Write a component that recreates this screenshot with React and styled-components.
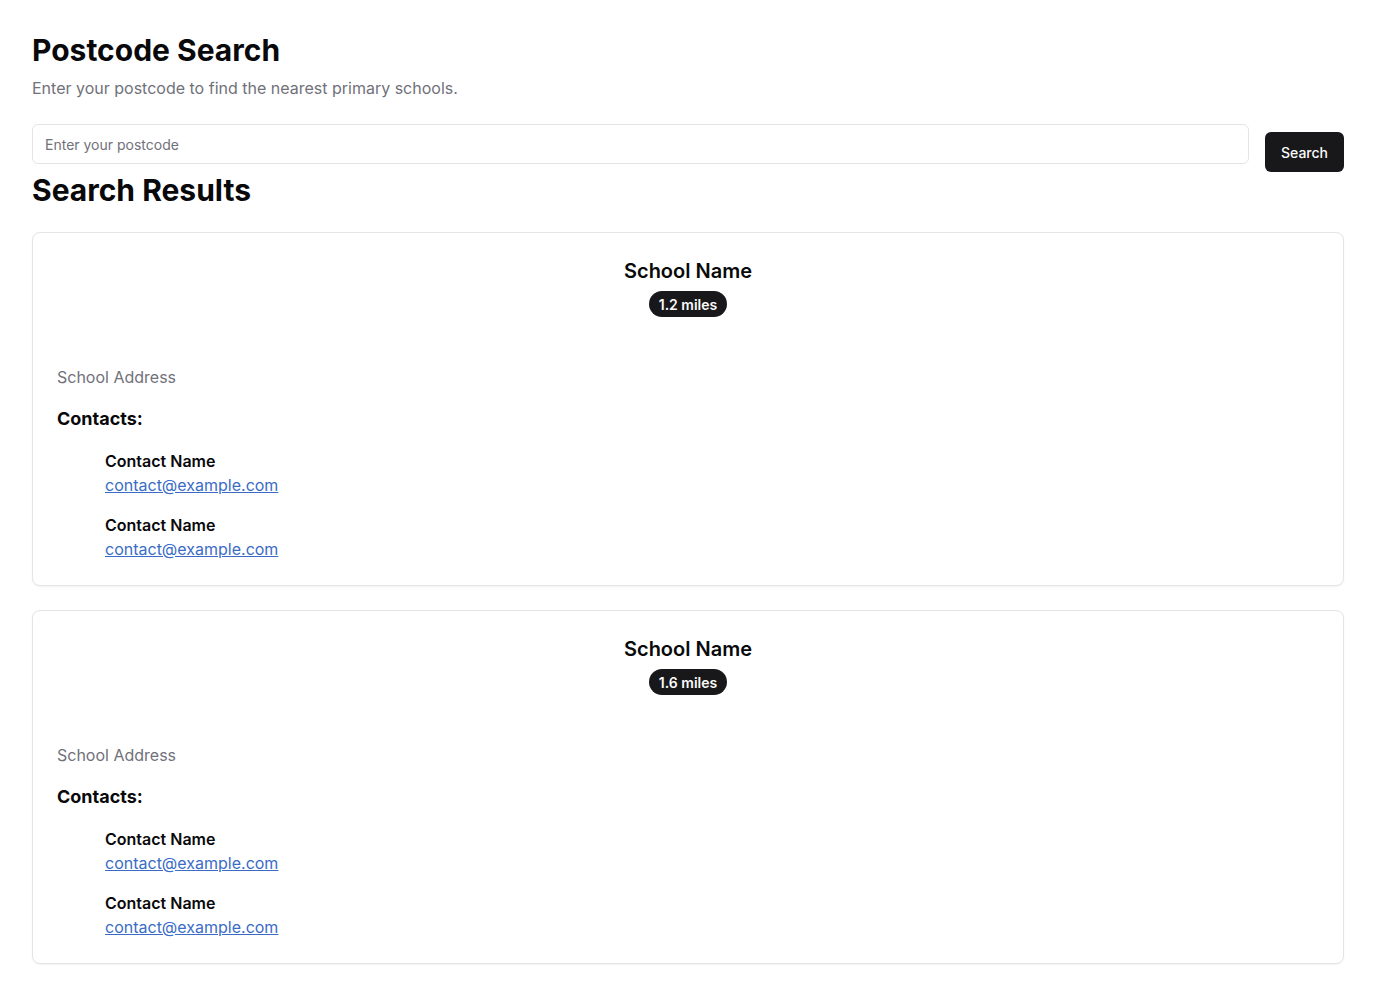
import React from 'react'
import styled, { createGlobalStyle } from 'styled-components'

const GlobalStyle = createGlobalStyle`
  * { box-sizing: border-box; }
  body {
    margin: 0;
    background: #fff;
    font-family: Inter, "Liberation Sans", sans-serif;
    color: #09090b;
  }
`

const Page = styled.div`
  padding: 32px;
`

const Title = styled.h1`
  margin: 0;
  font-size: 30px;
  line-height: 36px;
  font-weight: 700;
`

const Subtitle = styled.p`
  margin: 8px 0 0;
  font-size: 16px;
  line-height: 24px;
  color: #71717a;
`

const SearchRow = styled.form`
  display: flex;
  align-items: flex-start;
  gap: 16px;
  margin-top: 24px;
`

const Input = styled.input`
  flex: 1;
  height: 40px;
  padding: 0 12px;
  border: 1px solid #e4e4e7;
  border-radius: 6px;
  font-family: inherit;
  font-size: 14px;
  color: #09090b;
  outline: none;
  &::placeholder { color: #71717a; }
`

const Button = styled.button`
  height: 40px;
  margin-top: 8px;
  padding: 0 16px;
  border: none;
  border-radius: 6px;
  background: #18181b;
  color: #fafafa;
  font-family: inherit;
  font-size: 14px;
  font-weight: 500;
  cursor: pointer;
`

const SectionTitle = styled.h2`
  margin: 0;
  font-size: 30px;
  line-height: 36px;
  font-weight: 700;
`

const Results = styled.div`
  display: flex;
  flex-direction: column;
  gap: 24px;
  margin-top: 24px;
`

const Card = styled.div`
  border: 1px solid #e4e4e7;
  border-radius: 8px;
  background: #fff;
  box-shadow: 0 1px 2px rgba(0, 0, 0, 0.05);
`

const CardHeader = styled.div`
  display: flex;
  flex-direction: column;
  align-items: center;
  gap: 6px;
  padding: 24px;
`

const SchoolName = styled.h3`
  margin: 0;
  font-size: 20px;
  line-height: 28px;
  font-weight: 600;
`

const Badge = styled.span`
  display: inline-flex;
  align-items: center;
  height: 26px;
  padding: 0 10px;
  border-radius: 999px;
  background: #18181b;
  color: #fafafa;
  font-size: 14px;
  font-weight: 600;
`

const CardContent = styled.div`
  padding: 24px;
`

const Address = styled.p`
  margin: 0 0 16px;
  font-size: 16px;
  line-height: 24px;
  color: #71717a;
`

const ContactsTitle = styled.h4`
  margin: 0;
  font-size: 18px;
  line-height: 28px;
  font-weight: 700;
`

const ContactList = styled.ul`
  list-style: none;
  margin: 16px 0 0;
  padding: 0 0 0 48px;
  display: flex;
  flex-direction: column;
  gap: 16px;
`

const ContactName = styled.div`
  font-size: 16px;
  line-height: 24px;
  font-weight: 600;
`

const Email = styled.a`
  font-size: 16px;
  line-height: 24px;
  color: #3a6cc6;
  text-decoration: underline;
`

const schools = [
  { name: 'School Name', distance: '1.2 miles' },
  { name: 'School Name', distance: '1.6 miles' },
]

const contacts = [
  { name: 'Contact Name', email: 'contact@example.com' },
  { name: 'Contact Name', email: 'contact@example.com' },
]

export default function App() {
  return (
    <Page>
      <GlobalStyle />
      <Title>Postcode Search</Title>
      <Subtitle>Enter your postcode to find the nearest primary schools.</Subtitle>
      <SearchRow onSubmit={(e) => e.preventDefault()}>
        <Input placeholder="Enter your postcode" />
        <Button type="submit">Search</Button>
      </SearchRow>
      <SectionTitle>Search Results</SectionTitle>
      <Results>
        {schools.map((s, i) => (
          <Card key={i}>
            <CardHeader>
              <SchoolName>{s.name}</SchoolName>
              <Badge>{s.distance}</Badge>
            </CardHeader>
            <CardContent>
              <Address>School Address</Address>
              <ContactsTitle>Contacts:</ContactsTitle>
              <ContactList>
                {contacts.map((c, j) => (
                  <li key={j}>
                    <ContactName>{c.name}</ContactName>
                    <Email href="#">{c.email}</Email>
                  </li>
                ))}
              </ContactList>
            </CardContent>
          </Card>
        ))}
      </Results>
    </Page>
  )
}
